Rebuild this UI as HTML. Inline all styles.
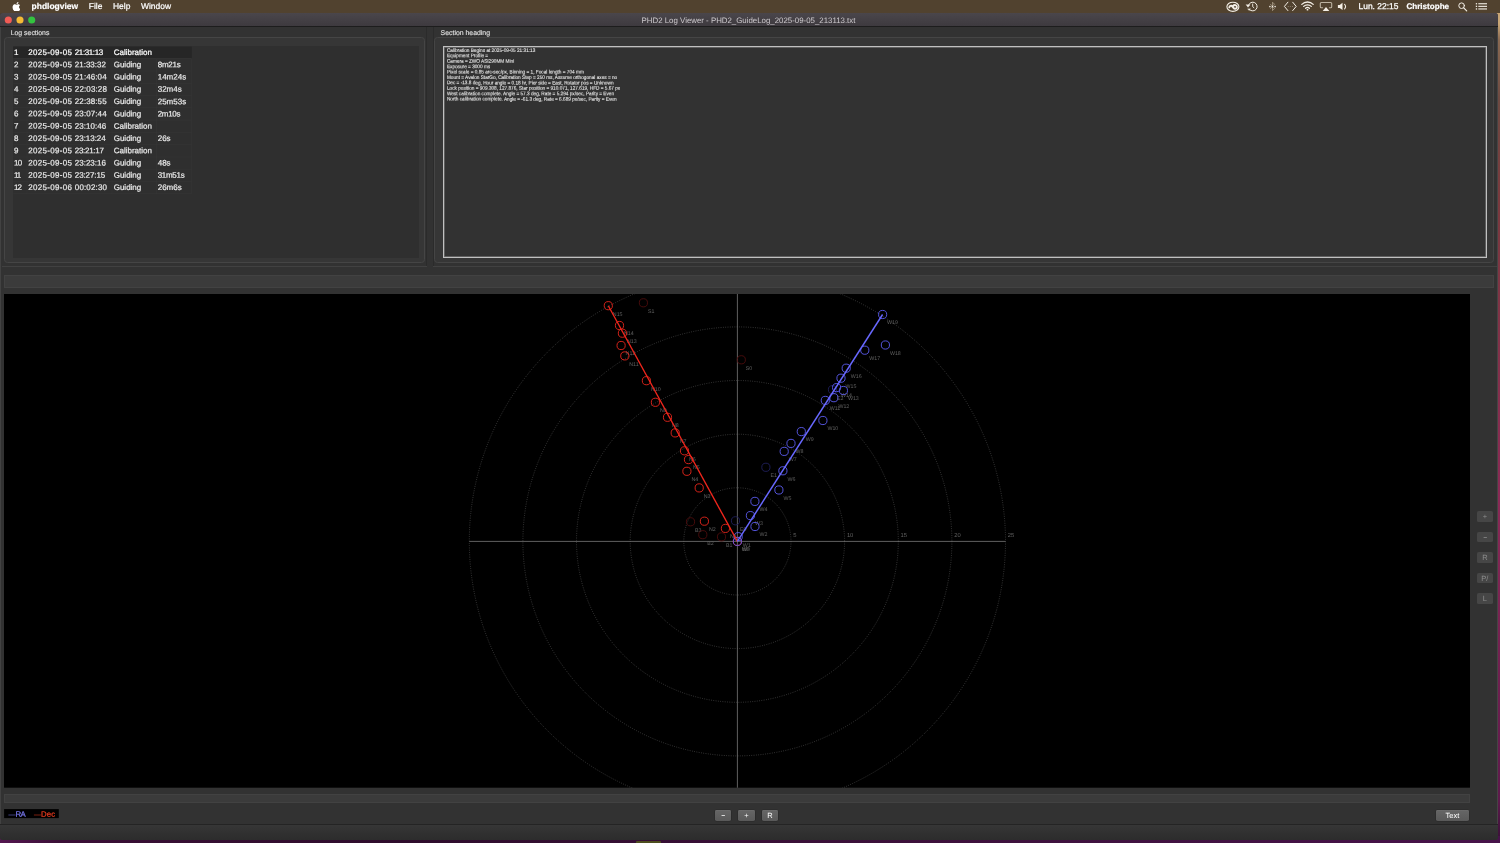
<!DOCTYPE html>
<html><head><meta charset="utf-8"><title>PHD2 Log Viewer</title>
<style>
*{margin:0;padding:0;box-sizing:border-box}
html,body{width:1500px;height:843px;overflow:hidden;background:#4f402e}
#desk{position:absolute;left:1490px;top:0;width:10px;height:843px;background:linear-gradient(180deg,#c9a676 0,#c9a676 24px,#8a6a52 40px,#6e4a42 100px,#7a3a3e 200px,#8a2a56 500px,#5e1a4c 800px,#3b1139 838px)}
#deskb{position:absolute;left:0;top:836px;width:1500px;height:7px;background:linear-gradient(90deg,#541650 0,#3a0f36 60px,#2e0c2c 400px,#3a1038 800px,#47134a 1500px)}
body{will-change:transform;text-rendering:geometricPrecision;position:relative;font-family:"Liberation Sans",sans-serif;color:#e8e8e8}
.abs{position:absolute}
#menubar{position:absolute;left:0;top:0;width:1500px;height:13px;background:#51422f}
#menubar span{position:absolute;top:-0.1px;line-height:13px;font-size:8.45px;color:#fff;white-space:nowrap;-webkit-text-stroke:0.2px #fff}
#win{position:absolute;left:0px;top:13px;width:1498px;height:826.5px;background:#323232;border-radius:3px 3px 3px 3px;overflow:hidden}
#title{position:absolute;left:0;top:0;width:100%;height:14px;background:linear-gradient(#4a464b,#3e3a3f);border-bottom:1px solid #1d1d1d}
#title .t{position:absolute;left:0;width:100%;top:0;line-height:13px;text-align:center;font-size:7.87px;color:#cdc9cd;padding-top:1px;padding-right:1px}
.tl{position:absolute;top:3.45px;width:7.1px;height:7.1px;border-radius:50%}
.gb{position:absolute;border:0.7px solid #454545;border-radius:3.5px;background:#363636}
.gbl{position:absolute;font-size:6.9px;color:#dcdcdc;white-space:nowrap;-webkit-text-stroke:0.18px #dcdcdc}
.list{position:absolute;background:#2f2f2f}
.rot{transform:rotate(0.03deg);transform-origin:0 0}
.row{position:absolute;left:0;width:178.6px;height:12.3px;line-height:13.4px;font-size:8px;color:#e6e6e6;white-space:nowrap;border-bottom:0.5px solid #363636;-webkit-text-stroke:0.22px #e6e6e6}
.row.sel{background:#262626;color:#fff}
.row span{position:absolute;top:0}
.c0{left:0.9px}.c1{left:15.0px;letter-spacing:0.32px}.c1t{left:61.6px}.c2{left:100.5px}.c3{left:144.5px}
.heading{position:absolute;font-size:4.72px;line-height:5.45px;color:#e4e4e4;white-space:nowrap}
.strip{position:absolute;background:#3b3b3b;border:0.5px solid #424242}
.plot{position:absolute;display:block}
.btn{position:absolute;background:linear-gradient(#666,#595959);border-radius:1.8px;color:#fff;font-size:7.5px;text-align:center;box-shadow:0 0 0 0.6px #282828,inset 0 0.5px 0 #717171}
.hy{display:inline-block;position:relative;top:-0.8px;transform:scale(1.8,1.25)}
.sbtn{position:absolute;background:#464646;border-radius:1.6px;color:#8e8e8e;font-size:7.5px;text-align:center}
</style></head>
<body>
<div id="desk"></div><div id="deskb"></div><div class="abs" style="left:636px;top:840.6px;width:25px;height:3px;background:#4d4d1e;border-radius:1px 1px 0 0"></div>
<div id="menubar">
<svg class="abs" style="left:12.2px;top:1.6px" width="8" height="9.6" viewBox="0 0 170 204"><path fill="#fff" d="M150 108c0-26 21-38 22-39-12-17-30-20-37-20-16-2-31 9-39 9s-20-9-33-9c-17 0-33 10-42 25-18 31-5 77 13 102 8 12 18 26 32 26 13-1 18-8 33-8s20 8 33 8c14 0 23-12 31-25 10-14 14-28 14-29-1 0-27-10-27-40zM125 31c7-9 12-20 10-32-10 0-22 7-29 15-6 7-12 19-10 31 11 1 22-6 29-14z"/></svg>
<span style="left:31.6px;font-weight:bold">phdlogview</span>
<span style="left:88.8px">File</span>
<span style="left:113px">Help</span>
<span style="left:141px">Window</span>
<svg class="abs" style="left:0;top:0" width="1500" height="13" viewBox="0 0 1500 13">
<g fill="none" stroke="#f4efe6" stroke-linecap="round" stroke-linejoin="round">
<!-- creative cloud -->
<ellipse cx="1232.9" cy="6.8" rx="6" ry="4.6" stroke-width="1.1"/>
<path d="M1229.3 7.4c0-1.6 2.2-2.2 3.2-.8l1.2 1.500c1 1.300 3.200.6 3.200-1.100 0-2-2.600-2.600-3.600-1.100" stroke-width="1.9"/>
<!-- time machine -->
<path d="M1249.5 9.600a4.400 4.400 0 1 0 -1 -4.400" stroke-width="1"/>
<path d="M1252.700 4v2.700l1.200 1" stroke-width="0.900"/>
<path d="M1246.400 4.900l1.600 2.300 1.700-2.100z" fill="#f4efe6" stroke-width="0.500"/>
<path d="M1247.900 9.100l1.300 1.500 1-1.700z" fill="#f4efe6" stroke-width="0.400"/>
<!-- bluetooth-ish (dim) -->
<path d="M1270.500 4.300l4 4.300-2 2v-8.400l2 2-4 4.300" stroke="#a99d88" stroke-width="0.800"/>
<!-- chevrons -->
<path d="M1287.900 2.200l-3.500 4.200 3.500 4.200M1292.700 2.200l3.500 4.200-3.500 4.200" stroke-width="1"/>
<!-- wifi -->
<path d="M1301.800 4.400a8 8 0 0 1 11.400 0" stroke-width="1.300"/>
<path d="M1303.700 6.400a5.300 5.300 0 0 1 7.600 0" stroke-width="1.300"/>
<path d="M1305.600 8.300a2.700 2.700 0 0 1 3.800 0" stroke-width="1.200"/>
<!-- airplay -->
<path d="M1322.600 7.800h-1.300a1 1 0 0 1 -1-1v-3.300a1 1 0 0 1 1-1h9.400a1 1 0 0 1 1 1v3.300a1 1 0 0 1 -1 1h-1.300" stroke="#bdb3a2" stroke-width="1.100"/>
<!-- volume wave -->
<path d="M1344.600 4.400a3 3 0 0 1 0 4.400" stroke-width="1.100"/>
<!-- search -->
<circle cx="1461.600" cy="5.700" r="2.800" stroke-width="1"/>
<path d="M1463.700 7.900l3 3" stroke-width="1.200"/>
</g>
<g fill="#f4efe6">
<circle cx="1269.900" cy="6.600" r="0.800"/><circle cx="1272.500" cy="6.600" r="0.800"/><circle cx="1275.100" cy="6.600" r="0.800"/>
<g fill="#9d927f"><circle cx="1288.200" cy="6.400" r="0.500"/><circle cx="1290.300" cy="6.400" r="0.500"/><circle cx="1292.400" cy="6.400" r="0.500"/></g>
<circle cx="1307.500" cy="9.700" r="0.900"/>
<path d="M1326 6.900l3.300 4.100h-6.600z"/>
<path d="M1337.900 4.900h1.800l2.800-2.200v7.400l-2.800-2.200h-1.800z"/>
<!-- list -->
<rect x="1475.800" y="3.100" width="1.300" height="1.300"/><rect x="1478.300" y="3.200" width="8.700" height="1.100"/>
<rect x="1475.800" y="5.700" width="1.300" height="1.300"/><rect x="1478.300" y="5.800" width="8.700" height="1.100"/>
<rect x="1475.800" y="8.300" width="1.300" height="1.300"/><rect x="1478.300" y="8.400" width="8.700" height="1.100"/>
</g>
</svg>
<span style="left:1358.5px;-webkit-text-stroke:0.25px #fff">Lun. 22:15</span>
<span style="left:1406.4px;font-weight:bold;font-size:8.1px">Christophe</span>
</div>
<div id="win">
<div id="title"><div class="t">PHD2 Log Viewer - PHD2_GuideLog_2025-09-05_213113.txt</div>
<svg class="abs" style="left:0;top:0" width="40" height="13" viewBox="0 13 40 13"><circle cx="8.3" cy="20" r="3.55" fill="#f25b55"/><circle cx="20" cy="20" r="3.55" fill="#f5bb36"/><circle cx="31.7" cy="20" r="3.55" fill="#33c33f"/></svg>
</div>
</div>
</div>

<div class="abs" style="left:0;top:27px;width:1px;height:810px;background:#424242"></div><div class="abs" style="left:1497.2px;top:27px;width:0.8px;height:810px;background:#454545"></div>
<div class="gbl" style="left:10.7px;top:30.1px">Log sections</div>
<div class="gb" style="left:4.4px;top:37.2px;width:421px;height:225.6px"></div>
<div class="list" style="left:13.2px;top:46.4px;width:405.8px;height:211.4px"></div>
<svg class="abs" style="left:13px;top:46px" width="182" height="152" viewBox="13 46 182 152">
<rect x="13.2" y="46.7" width="178.6" height="11.38" fill="#262626"/>
<rect x="13.2" y="58.48" width="178.6" height="0.5" fill="#373737"/>
<rect x="13.2" y="70.75" width="178.6" height="0.5" fill="#373737"/>
<rect x="13.2" y="83.03" width="178.6" height="0.5" fill="#373737"/>
<rect x="13.2" y="95.30" width="178.6" height="0.5" fill="#373737"/>
<rect x="13.2" y="107.58" width="178.6" height="0.5" fill="#373737"/>
<rect x="13.2" y="119.85" width="178.6" height="0.5" fill="#373737"/>
<rect x="13.2" y="132.12" width="178.6" height="0.5" fill="#373737"/>
<rect x="13.2" y="144.40" width="178.6" height="0.5" fill="#373737"/>
<rect x="13.2" y="156.68" width="178.6" height="0.5" fill="#373737"/>
<rect x="13.2" y="168.95" width="178.6" height="0.5" fill="#373737"/>
<rect x="13.2" y="181.23" width="178.6" height="0.5" fill="#373737"/>
<rect x="13.2" y="193.50" width="178.6" height="0.5" fill="#373737"/>
<rect x="26.7" y="58.98" width="0.5" height="135.0" fill="#373737"/>
<rect x="111.7" y="58.98" width="0.5" height="135.0" fill="#373737"/>
<rect x="156.0" y="58.98" width="0.5" height="135.0" fill="#373737"/>
<rect x="191.6" y="58.98" width="0.5" height="135.0" fill="#373737"/>
<g transform="matrix(1 0.0005 0 1 0 0)" font-family="Liberation Sans, sans-serif" font-size="8" fill="#e8e8e8" stroke="#e8e8e8" stroke-width="0.22" stroke-linejoin="round">
<g fill="#fff" stroke="#fff"><text x="14.1" y="54.95">1</text><text x="28.2" y="54.95" letter-spacing="0.320">2025-09-05</text><text x="74.8" y="54.95" letter-spacing="-0.391">21:31:13</text><text x="113.7" y="54.95">Calibration</text></g>
<g><text x="14.1" y="67.22">2</text><text x="28.2" y="67.22" letter-spacing="0.320">2025-09-05</text><text x="74.8" y="67.22" letter-spacing="-0.006">21:33:32</text><text x="113.7" y="67.22">Guiding</text><text x="157.7" y="67.22" letter-spacing="-0.250">8m21s</text></g>
<g><text x="14.1" y="79.50">3</text><text x="28.2" y="79.50" letter-spacing="0.320">2025-09-05</text><text x="74.8" y="79.50" letter-spacing="0.094">21:46:04</text><text x="113.7" y="79.50">Guiding</text><text x="157.7" y="79.50">14m24s</text></g>
<g><text x="14.1" y="91.78">4</text><text x="28.2" y="91.78" letter-spacing="0.320">2025-09-05</text><text x="74.8" y="91.78" letter-spacing="0.137">22:03:28</text><text x="113.7" y="91.78">Guiding</text><text x="157.7" y="91.78">32m4s</text></g>
<g><text x="14.1" y="104.05">5</text><text x="28.2" y="104.05" letter-spacing="0.320">2025-09-05</text><text x="74.8" y="104.05" letter-spacing="0.094">22:38:55</text><text x="113.7" y="104.05">Guiding</text><text x="157.7" y="104.05">25m53s</text></g>
<g><text x="14.1" y="116.33">6</text><text x="28.2" y="116.33" letter-spacing="0.320">2025-09-05</text><text x="74.8" y="116.33" letter-spacing="0.094">23:07:44</text><text x="113.7" y="116.33">Guiding</text><text x="157.7" y="116.33" letter-spacing="-0.300">2m10s</text></g>
<g><text x="14.1" y="128.60">7</text><text x="28.2" y="128.60" letter-spacing="0.320">2025-09-05</text><text x="74.8" y="128.60" letter-spacing="0.037">23:10:46</text><text x="113.7" y="128.60">Calibration</text></g>
<g><text x="14.1" y="140.88">8</text><text x="28.2" y="140.88" letter-spacing="0.320">2025-09-05</text><text x="74.8" y="140.88" letter-spacing="-0.034">23:13:24</text><text x="113.7" y="140.88">Guiding</text><text x="157.7" y="140.88">26s</text></g>
<g><text x="14.1" y="153.15">9</text><text x="28.2" y="153.15" letter-spacing="0.320">2025-09-05</text><text x="74.8" y="153.15" letter-spacing="-0.291">23:21:17</text><text x="113.7" y="153.15">Calibration</text></g>
<g><text x="14.1" y="165.43" letter-spacing="-0.800">10</text><text x="28.2" y="165.43" letter-spacing="0.320">2025-09-05</text><text x="74.8" y="165.43" letter-spacing="-0.006">23:23:16</text><text x="113.7" y="165.43">Guiding</text><text x="157.7" y="165.43">48s</text></g>
<g><text x="14.1" y="177.70" letter-spacing="-1.300">11</text><text x="28.2" y="177.70" letter-spacing="0.320">2025-09-05</text><text x="74.8" y="177.70" letter-spacing="-0.106">23:27:15</text><text x="113.7" y="177.70">Guiding</text><text x="157.7" y="177.70" letter-spacing="-0.300">31m51s</text></g>
<g><text x="14.1" y="189.98" letter-spacing="-1.100">12</text><text x="28.2" y="189.98" letter-spacing="0.320">2025-09-06</text><text x="74.8" y="189.98" letter-spacing="0.151">00:02:30</text><text x="113.7" y="189.98">Guiding</text><text x="157.7" y="189.98">26m6s</text></g>
</g></svg>

<div class="abs" style="left:426.4px;top:27px;width:0.7px;height:239px;background:#2b2b2b"></div><div class="abs" style="left:432.8px;top:27px;width:0.7px;height:239px;background:#2b2b2b"></div>
<div class="gbl" style="left:440.6px;top:30.1px">Section heading</div>
<div class="gb" style="left:434.2px;top:37.2px;width:1059.6px;height:225.6px"></div>
<div class="abs" style="left:443px;top:46.2px;width:1044px;height:211.6px;border:0.8px solid #c0c0c0;background:#323232;box-shadow:inset 0 0 0 0.7px #707070"></div>
<svg class="abs" style="left:444px;top:47px" width="300" height="60" viewBox="444 47 300 60">
<g transform="matrix(0.907 0.0005 0 1 446.9 0)" font-family="Liberation Sans, sans-serif" font-size="5.2" fill="#e6e6e6" stroke="#e6e6e6" stroke-width="0.1" stroke-linejoin="round">
<text x="0" y="51.91">Calibration Begins at 2025-09-05 21:31:13</text>
<text x="0" y="57.32">Equipment Profile =</text>
<text x="0" y="62.73">Camera = ZWO ASI290MM Mini</text>
<text x="0" y="68.14">Exposure = 3000 ms</text>
<text x="0" y="73.55">Pixel scale = 0.85 arc-sec/px, Binning = 1, Focal length = 704 mm</text>
<text x="0" y="78.96">Mount = Avalon StarGo, Calibration Step = 250 ms, Assume orthogonal axes = no</text>
<text x="0" y="84.37">Dec = -13.8 deg, Hour angle = 0.18 hr, Pier side = East, Rotator pos = Unknown</text>
<text x="0" y="89.78">Lock position = 909.308, 127.876, Star position = 910.071, 127.619, HFD = 5.67 px</text>
<text x="0" y="95.19">West calibration complete. Angle = 57.3 deg, Rate = 5.294 px/sec, Parity = Even</text>
<text x="0" y="100.60">North calibration complete. Angle = -61.3 deg, Rate = 6.689 px/sec, Parity = Even</text>
</g></svg>

<div class="abs" style="left:1.5px;top:266.1px;width:425.5px;height:0.6px;background:#414141"></div><div class="abs" style="left:433px;top:266.1px;width:1064px;height:0.6px;background:#414141"></div>
<div class="strip" style="left:4px;top:275.2px;width:1490px;height:12.8px"></div>
<svg class="plot" style="left:4px;top:294px" width="1466" height="493.70000000000005" viewBox="4 294 1466 493.70000000000005">
<rect x="4" y="294" width="1466" height="493.70000000000005" fill="#000"/>
<circle cx="737.4" cy="541.4" r="53.6" fill="none" stroke="#575757" stroke-width="0.75" stroke-dasharray="0.8 1.5"/>
<circle cx="737.4" cy="541.4" r="107.2" fill="none" stroke="#575757" stroke-width="0.75" stroke-dasharray="0.8 1.5"/>
<circle cx="737.4" cy="541.4" r="160.9" fill="none" stroke="#575757" stroke-width="0.75" stroke-dasharray="0.8 1.5"/>
<circle cx="737.4" cy="541.4" r="214.5" fill="none" stroke="#575757" stroke-width="0.75" stroke-dasharray="0.8 1.5"/>
<circle cx="737.4" cy="541.4" r="268.1" fill="none" stroke="#575757" stroke-width="0.75" stroke-dasharray="0.8 1.5"/>
<line x1="469.3" y1="541.4" x2="1005.5" y2="541.4" stroke="#8a8a8a" stroke-width="0.7"/>
<line x1="737.4" y1="294" x2="737.4" y2="787.7" stroke="#8a8a8a" stroke-width="0.7"/>
<g font-family="Liberation Sans, sans-serif" font-size="5.3" fill="#606060">
<text x="793.3" y="537.4" font-size="5.8">5</text>
<text x="846.9" y="537.4" font-size="5.8">10</text>
<text x="900.6" y="537.4" font-size="5.8">15</text>
<text x="954.2" y="537.4" font-size="5.8">20</text>
<text x="1007.8" y="537.4" font-size="5.8">25</text>
<text x="745.8" y="369.7">S0</text>
<text x="647.9" y="312.7">S1</text>
<text x="726.0" y="546.8">B1</text>
<text x="707.3" y="544.6">B2</text>
<text x="695.0" y="531.7">B3</text>
<text x="740.0" y="530.7">E0</text>
<text x="770.4" y="477.2">E1</text>
<text x="837.0" y="399.6">E2</text>
<text x="741.9" y="551.3">N0</text>
<text x="729.9" y="538.3">N1</text>
<text x="708.9" y="531.1">N2</text>
<text x="703.7" y="497.8">N3</text>
<text x="691.4" y="481.2">N4</text>
<text x="693.0" y="469.5">N5</text>
<text x="689.0" y="460.7">N6</text>
<text x="679.7" y="442.8">N7</text>
<text x="672.0" y="427.2">N8</text>
<text x="659.9" y="412.2">N9</text>
<text x="650.9" y="390.6">N10</text>
<text x="629.3" y="365.8">N11</text>
<text x="625.6" y="355.4">N12</text>
<text x="626.9" y="343.1">N13</text>
<text x="624.0" y="335.4">N14</text>
<text x="612.8" y="315.6">N15</text>
<text x="741.9" y="551.3">W0</text>
<text x="742.7" y="546.6">W1</text>
<text x="759.5" y="536.4">W2</text>
<text x="754.9" y="525.5">W3</text>
<text x="759.4" y="511.3">W4</text>
<text x="783.4" y="499.9">W5</text>
<text x="787.4" y="480.7">W6</text>
<text x="788.7" y="461.3">W7</text>
<text x="795.5" y="453.3">W8</text>
<text x="805.8" y="441.5">W9</text>
<text x="827.4" y="430.4">W10</text>
<text x="829.8" y="410.3">W11</text>
<text x="838.4" y="407.6">W12</text>
<text x="847.9" y="400.4">W13</text>
<text x="841.1" y="397.5">W14</text>
<text x="845.5" y="388.1">W15</text>
<text x="850.7" y="378.1">W16</text>
<text x="869.3" y="360.1">W17</text>
<text x="889.9" y="354.9">W18</text>
<text x="887.1" y="324.4">W19</text>
</g>
<g fill="none" stroke-width="0.9">
<circle cx="741.3" cy="359.8" r="4.1" stroke="#4e0c0c"/>
<circle cx="643.4" cy="302.8" r="4.1" stroke="#4e0c0c"/>
<circle cx="721.5" cy="536.9" r="4.1" stroke="#4e0c0c"/>
<circle cx="702.8" cy="534.7" r="4.1" stroke="#4e0c0c"/>
<circle cx="690.5" cy="521.8" r="4.1" stroke="#4e0c0c"/>
<circle cx="735.5" cy="520.8" r="4.1" stroke="#20205c"/>
<circle cx="765.9" cy="467.3" r="4.1" stroke="#20205c"/>
<circle cx="832.5" cy="389.7" r="4.1" stroke="#20205c"/>
<circle cx="737.4" cy="541.4" r="4.1" stroke="#ea261c"/>
<circle cx="725.4" cy="528.4" r="4.1" stroke="#ea261c"/>
<circle cx="704.4" cy="521.2" r="4.1" stroke="#ea261c"/>
<circle cx="699.2" cy="487.9" r="4.1" stroke="#ea261c"/>
<circle cx="686.9" cy="471.3" r="4.1" stroke="#ea261c"/>
<circle cx="688.5" cy="459.6" r="4.1" stroke="#ea261c"/>
<circle cx="684.5" cy="450.8" r="4.1" stroke="#ea261c"/>
<circle cx="675.2" cy="432.9" r="4.1" stroke="#ea261c"/>
<circle cx="667.5" cy="417.3" r="4.1" stroke="#ea261c"/>
<circle cx="655.4" cy="402.3" r="4.1" stroke="#ea261c"/>
<circle cx="646.4" cy="380.7" r="4.1" stroke="#ea261c"/>
<circle cx="624.8" cy="355.9" r="4.1" stroke="#ea261c"/>
<circle cx="621.1" cy="345.5" r="4.1" stroke="#ea261c"/>
<circle cx="622.4" cy="333.2" r="4.1" stroke="#ea261c"/>
<circle cx="619.5" cy="325.5" r="4.1" stroke="#ea261c"/>
<circle cx="608.3" cy="305.7" r="4.1" stroke="#ea261c"/>
<circle cx="737.4" cy="541.4" r="4.1" stroke="#5c5cf2"/>
<circle cx="738.2" cy="536.7" r="4.1" stroke="#5c5cf2"/>
<circle cx="755.0" cy="526.5" r="4.1" stroke="#5c5cf2"/>
<circle cx="750.4" cy="515.6" r="4.1" stroke="#5c5cf2"/>
<circle cx="754.9" cy="501.4" r="4.1" stroke="#5c5cf2"/>
<circle cx="778.9" cy="490.0" r="4.1" stroke="#5c5cf2"/>
<circle cx="782.9" cy="470.8" r="4.1" stroke="#5c5cf2"/>
<circle cx="784.2" cy="451.4" r="4.1" stroke="#5c5cf2"/>
<circle cx="791.0" cy="443.4" r="4.1" stroke="#5c5cf2"/>
<circle cx="801.3" cy="431.6" r="4.1" stroke="#5c5cf2"/>
<circle cx="822.9" cy="420.5" r="4.1" stroke="#5c5cf2"/>
<circle cx="825.3" cy="400.4" r="4.1" stroke="#5c5cf2"/>
<circle cx="833.9" cy="397.7" r="4.1" stroke="#5c5cf2"/>
<circle cx="843.4" cy="390.5" r="4.1" stroke="#5c5cf2"/>
<circle cx="836.6" cy="387.6" r="4.1" stroke="#5c5cf2"/>
<circle cx="841.0" cy="378.2" r="4.1" stroke="#5c5cf2"/>
<circle cx="846.2" cy="368.2" r="4.1" stroke="#5c5cf2"/>
<circle cx="864.8" cy="350.2" r="4.1" stroke="#5c5cf2"/>
<circle cx="885.4" cy="345.0" r="4.1" stroke="#5c5cf2"/>
<circle cx="882.6" cy="314.5" r="4.1" stroke="#5c5cf2"/>
</g>
<line x1="737.4" y1="541.4" x2="608.3" y2="305.7" stroke="#f0261c" stroke-width="1.35"/>
<line x1="737.4" y1="541.4" x2="882.6" y2="314.5" stroke="#6868ff" stroke-width="1.45"/>
</svg>
<div class="strip" style="left:4px;top:793.8px;width:1466px;height:9px"></div>

<svg class="abs" style="left:4px;top:809px" width="56" height="10" viewBox="4 809 56 10">
<rect x="4.1" y="809.1" width="54.7" height="9" fill="#000"/>
<g transform="matrix(1 0.0005 0 1 0 0)" font-family="Liberation Sans, sans-serif" font-size="7.8" stroke-width="0.25" stroke-linejoin="round">
<text y="816.85" fill="#7676e8" stroke="#7676e8"><tspan x="8.6" font-size="7" stroke-width="0.12">—</tspan><tspan x="15.5" letter-spacing="-0.7">RA</tspan></text>
<text y="816.85" fill="#e2391e" stroke="#e2391e"><tspan x="34" font-size="7.1" stroke-width="0.12">—</tspan><tspan x="40.9" letter-spacing="0.15">Dec</tspan></text>
</g></svg>

<div class="btn" style="left:715px;top:809.7px;width:16.2px;height:11px;line-height:11px"><span class="hy">-</span></div>
<div class="btn" style="left:738.4px;top:809.7px;width:16.2px;height:11px;line-height:11px">+</div>
<div class="btn" style="left:761.8px;top:809.7px;width:16.2px;height:11px;line-height:11px">R</div>
<div class="btn" style="left:1435.6px;top:809.7px;width:33.7px;height:11px;line-height:11px">Text</div>

<div class="sbtn" style="left:1476.8px;top:511.2px;width:16.2px;height:10.6px;line-height:11.4px">+</div>
<div class="sbtn" style="left:1476.8px;top:531.7px;width:16.2px;height:10.6px;line-height:11.4px"><span class="hy">-</span></div>
<div class="sbtn" style="left:1476.8px;top:552.2px;width:16.2px;height:10.6px;line-height:11.4px">R</div>
<div class="sbtn" style="left:1476.8px;top:572.7px;width:16.2px;height:10.6px;line-height:11.4px">P/</div>
<div class="sbtn" style="left:1476.8px;top:593.2px;width:16.2px;height:10.6px;line-height:11.4px">L</div>

<div class="abs" style="left:0px;top:825px;width:1498px;height:14.500px;background:linear-gradient(#363636,#2c2c2c);border-radius:0 0 3px 3px"></div>
<div class="abs" style="left:0px;top:824.3px;width:1498px;height:0.8px;background:#242424"></div>
</body></html>
